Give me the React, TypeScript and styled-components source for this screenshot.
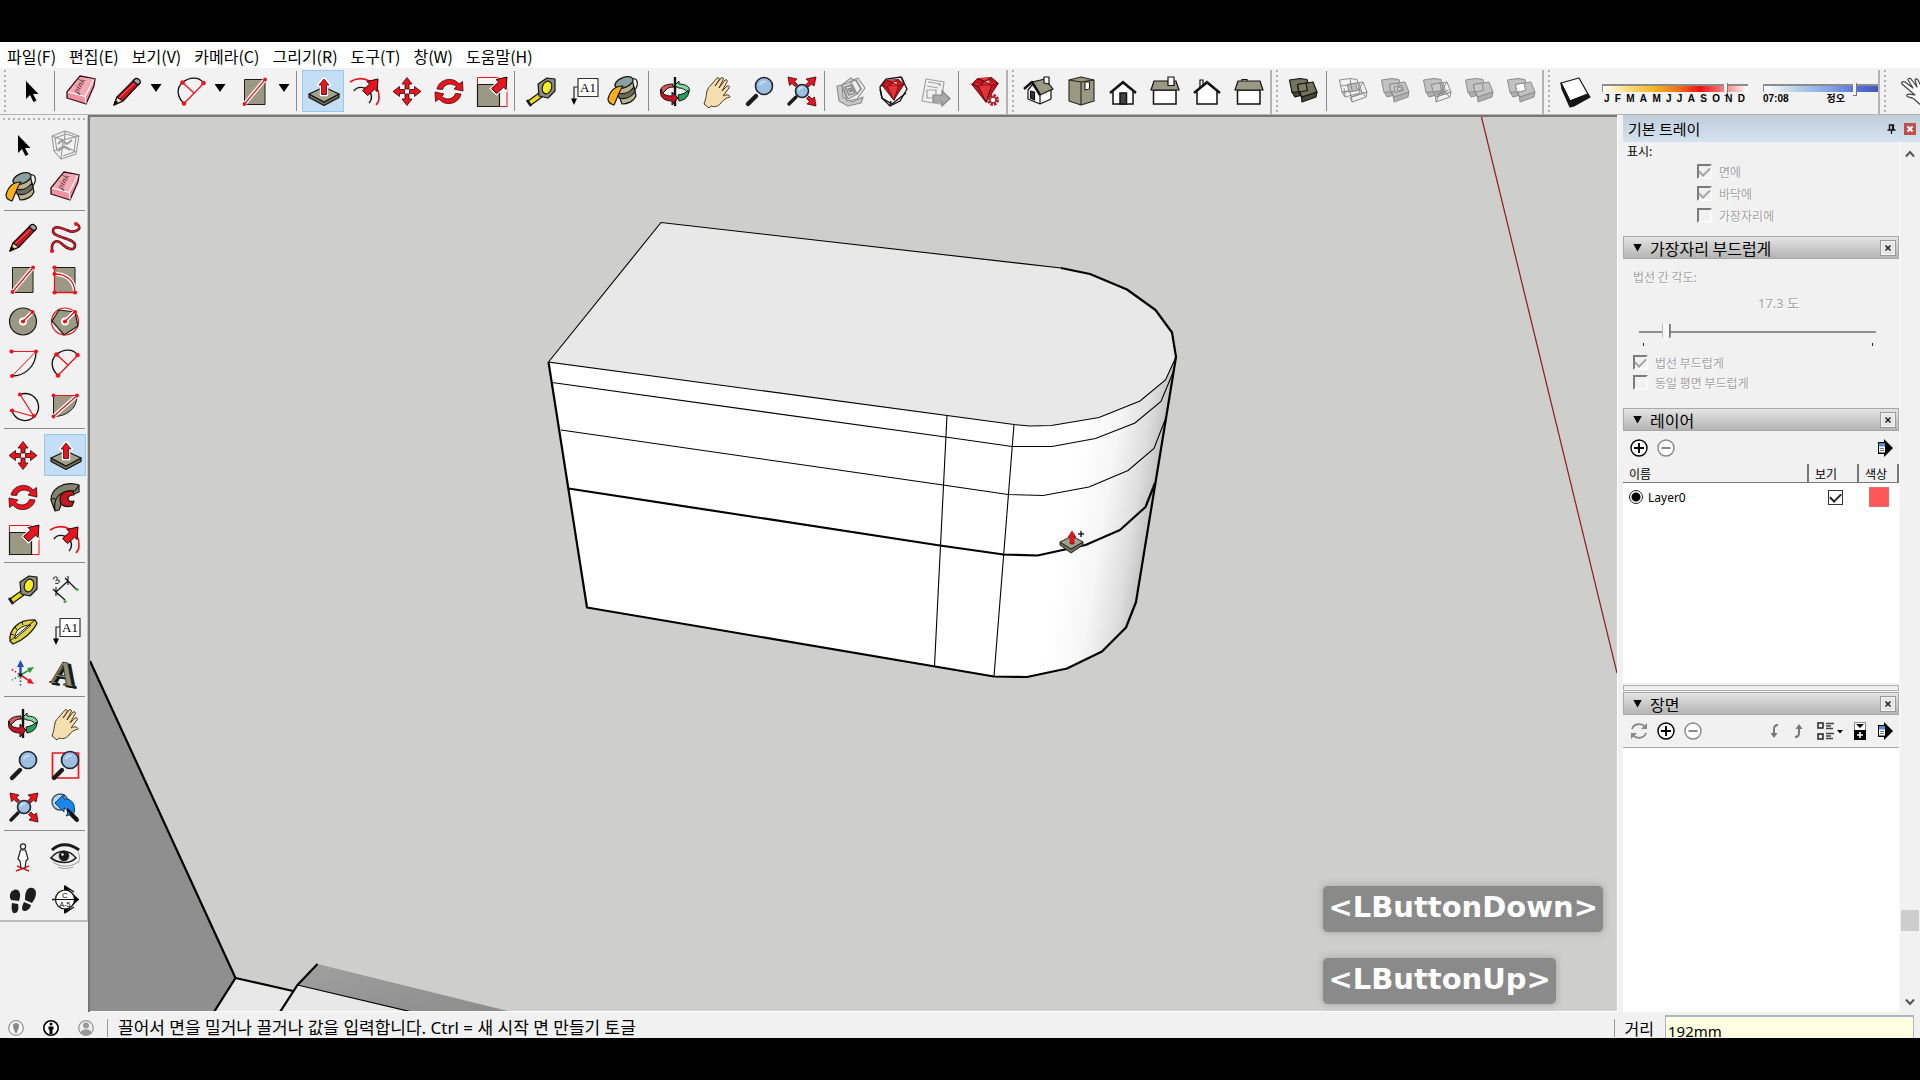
import React from "react";
import styled, { createGlobalStyle, css } from "styled-components";

const KR = `"Noto Sans CJK KR", "Noto Sans", sans-serif`;

const Global = createGlobalStyle`
  * { box-sizing: border-box; }
  body { margin: 0; background: #000; font-family: ${KR}; color: #000; }
  button { font: inherit; color: inherit; border: 0; padding: 0; background: none; }
`;

/* ---------- icons, each drawn on a 42 x 42 grid ---------- */

const TAN = "#9b9983";
const RED = "#e8141e";

const Dot = ({ x, y, r = 2.1 }: { x: number; y: number; r?: number }) => <circle cx={x} cy={y} r={r} fill={RED} />;
const Halo = ({ d }: { d: string }) => (
  <>
    <path d={d} fill="none" stroke="#fff" strokeWidth="4" />
    <path d={d} fill="none" stroke={RED} strokeWidth="1.3" />
  </>
);
const Lens = ({ x, y, r }: { x: number; y: number; r: number }) => (
  <>
    <circle cx={x} cy={y} r={r} fill="#9dbfe0" stroke="#1d2630" strokeWidth="1.6" />
    <path d={`M${x - r * 0.5} ${y - r * 0.1}A${r * 0.6} ${r * 0.6} 0 0 1 ${x + r * 0.2} ${y - r * 0.5}`} stroke="#cfe2f5" strokeWidth="1.6" fill="none" />
  </>
);
const Handle = ({ d, w = 4.4 }: { d: string; w?: number }) => <path d={d} stroke="#1b1b1b" strokeWidth={w} strokeLinecap="round" />;
const DiagArrow = ({ x = 0, y = 0 }: { x?: number; y?: number }) => (
  <path d={`M${x + 36} ${y + 7}l-11 2.5 2.6 2.6-7 6.5 5 5 7-6.5 2.4 2.4z`} fill={RED} stroke="#2a0003" strokeWidth="1" />
);
const Solids = ({ mode }: { mode: number }) => {
  const dark = mode === 0;
  const face = dark ? "#73745f" : "#c1c1c1";
  const side = dark ? "#474838" : "#b0b0b0";
  const hollowA = mode === 1;
  const hollowB = mode === 1 || mode === 3;
  return (
    <g stroke={dark ? "#14150f" : "#8c8c8c"} strokeWidth={dark ? 1.2 : 1} strokeLinejoin="round">
      <path d="M10 22l17-3 1 4-15 4z" fill={hollowA ? "none" : side} />
      <path d="M7.500 10L18 8.500l7 1 2.500 10.500L10 22.500z" fill={hollowA ? "none" : face} />
      <path d="M19.500 27L35 22l-1 5-14 5z" fill={hollowB ? "none" : side} />
      <path d="M15.500 14.500L31 12l4 10-15.500 5z" fill={hollowB ? "none" : face} />
      {!hollowB && <path d="M15.500 14.500l1.500 8 2.500 4.500" fill="none" />}
      <path d="M15.500 14.500L24 13l1.500 7.500-8.500 1.500z" fill={mode === 5 ? "#fff" : mode === 1 ? "#bcbcbc" : dark ? "#7d7e69" : "#c8c8c8"} />
      {mode === 1 && <path d="M8.500 16l8-1M18 8.500l2 12M13 26l-1-8M27 13l3 10M20 32l-2-5M31 12l-4 7 7 8" fill="none" />}
      {mode === 2 && <path d="M20 17l8-1.500 1.500 5-8 2zM23 18l4-1 1 3-4 1z" fill="#d2d2d2" />}
      {mode === 3 && <path d="M27 13l3 10M20 32l5-11M31 12l-5 8 8 7M21 24l12-4" fill="none" />}
    </g>
  );
};
const Sheets = () => (
  <g fill="#eee" stroke="#8f8f8f" strokeWidth="1.200" strokeLinejoin="round">
    <path d="M7 16l5-1 1 12 9 5 11-5-2 6-13 3-9-5z" fill="#c9c9c9" />
    <path d="M12 15l9-7 2 2 5-2 7 10-8 11-10 2z" />
    <path d="M12 15l9-3 6 12-9 5z" fill="#ddd" />
    <path d="M15 17l6-2 4 8-6 2zM19 12l7-2 5 9-4 5" fill="none" strokeWidth="1.700" />
    <path d="M18 19l3-1 2 3-3 1z" fill="#999" />
  </g>
);
const Gem = ({ y = 0, s = 1 }: { y?: number; s?: number }) => (
  <g transform={`translate(${21 - 21 * s} ${y}) scale(${s})`} stroke="#4a0006" strokeWidth=".9" strokeLinejoin="round">
    <path d="M7 15l6-6 15-1 7 6-13 20z" fill="#c31720" />
    <path d="M7 15l7 2 7-5 7 4 7-2M14 17l8 17 6-18M13 9l8 3 7-4" fill="#e3343c" />
    <path d="M21 12l4-1 1 3z" fill="#ffd0d0" stroke="none" />
  </g>
);

const art: Record<string, React.ReactNode> = {
  select: <path d="M16 11v18l4-4 3.500 7 3-1.500-3.500-6.500h5.500z" />,
  eraser: (
    <g strokeLinejoin="round">
      <path d="M20 6l15 3-1 7-8 18-19-6V22z" fill="#f48fa0" stroke="#2b1216" strokeWidth="1.300" />
      <path d="M20 7l14 2-9 17-17-4z" fill="#f7a9b6" />
      <path d="M8 22l17 4.500 9-17M25 26.500l1 7" fill="none" stroke="#fff" strokeWidth="1.200" />
      <text x="18" y="24" fontSize="9" fontFamily="Liberation Serif, serif" fontStyle="italic" fill="#3a1a20" transform="rotate(-62 18 24)">pink</text>
    </g>
  ),
  pencil: (
    <g strokeLinejoin="round" stroke="#160405" strokeWidth="1.100">
      <path d="M8 35l3-8L29 9l5 4-17 18z" fill="#c11720" />
      <path d="M13 28L31 11" stroke="#ff6a6a" strokeWidth="1" />
      <path d="M8 35l3-8 6 4z" fill="#ead9a5" />
      <path d="M8 35l1.500-4 2 1.500z" fill="#000" />
      <path d="M29 9c2-2 7 2 5 4l-2 2-5-4z" fill="#9aa3a8" />
    </g>
  ),
  freehand: (
    <g>
      <path d="M8 35C7 25 13 23 18 28S31 36 31 29 9 22 9 15 20 13 25 15 40 13 33 8" fill="none" stroke="#4d0a0f" strokeWidth="2.600" />
      <path d="M8 35C7 25 13 23 18 28S31 36 31 29 9 22 9 15 20 13 25 15 40 13 33 8" fill="none" stroke="#d0202a" strokeWidth="1.300" />
      <Dot x={8} y={35} /><Dot x={32} y={8} />
    </g>
  ),
  rect: (
    <g>
      <path d="M10.500 9.500h20.500v25H10.500z" fill={TAN} stroke="#1c1c18" />
      <Halo d="M10.500 34L31 9.500" /><Dot x={10.500} y={34} r={1.900} /><Dot x={31} y={9.500} r={1.900} />
    </g>
  ),
  rrect: (
    <g>
      <path d="M10.500 9.500h20.500v25H10.500z" fill={TAN} stroke="#1c1c18" />
      <Halo d="M10.500 16c11 0 20 6 20.500 18.500" />
      <path d="M10.500 9.500v25H31" fill="none" stroke={RED} strokeWidth="1.300" />
      <Dot x={10.500} y={9.500} /><Dot x={10.500} y={16} /><Dot x={10.500} y={34.500} /><Dot x={31} y={34.500} />
    </g>
  ),
  circle: (
    <g>
      <circle cx="21" cy="21.500" r="13.500" fill={TAN} stroke="#1c1c18" strokeWidth="1.200" />
      <circle cx="21" cy="21.500" r="4" fill="#fff" /><Halo d="M21 21.500L30.500 12" /><Dot x={21} y={21.500} /><Dot x={30.500} y={12} />
    </g>
  ),
  polygon: (
    <g>
      <circle cx="21" cy="21.500" r="13.500" fill="none" stroke={RED} strokeWidth="1.200" />
      <path d="M15 10l16 2 3 14-14 9-12-14z" fill={TAN} stroke="#1c1c18" strokeWidth="1.200" />
      <circle cx="21" cy="21.500" r="4" fill="#fff" /><Halo d="M21 21.500L30.500 12" /><Dot x={21} y={21.500} /><Dot x={31} y={12} />
    </g>
  ),
  arc: (
    <g fill="none">
      <path d="M10 34c12 0 24-9 24-24" stroke="#111" strokeWidth="1.300" />
      <path d="M9.500 9.500H34L10 34" stroke={RED} /><Dot x={9.500} y={9.500} /><Dot x={34} y={9.500} /><Dot x={10} y={34} />
    </g>
  ),
  arc2: (
    <g fill="none">
      <path d="M14 33.500C7 27 6 18 12.500 12.500S29 6 33.500 13" stroke="#111" strokeWidth="1.300" />
      <path d="M14 33.500l19.500-20M12.500 12.500l11.500 10.500" stroke={RED} strokeWidth="1.300" />
      <Dot x={12.500} y={12.500} r={2.300} /><Dot x={33.500} y={13} r={2.300} /><Dot x={14} y={33.500} r={2.300} />
    </g>
  ),
  arc3: (
    <g fill="none">
      <path d="M18 10.500a13.500 13.500 0 1 1-8 16" stroke="#111" strokeWidth="1.300" />
      <path d="M18 10.500l14 22-22-6" stroke={RED} strokeWidth="1.200" /><Dot x={18} y={10.500} /><Dot x={32} y={32} /><Dot x={10} y={26.500} />
    </g>
  ),
  pie: (
    <g>
      <path d="M9.500 11.500H33c0 14-11 21-23.500 21z" fill={TAN} stroke="#1c1c18" />
      <Halo d="M9.500 32.500L33 11.500" /><path d="M9.500 11.500H33" stroke={RED} />
      <Dot x={9.500} y={11.500} r={1.900} /><Dot x={33} y={11.500} r={1.900} /><Dot x={9.500} y={32.500} r={1.900} />
    </g>
  ),
  move: (
    <g fill={RED} stroke="#33070a" strokeWidth=".8">
      {[0, 90, 180, 270].map((a) => (
        <path key={a} transform={`rotate(${a} 21 21.500)`} d="M21 7.500l5 6.500h-3v5h-4v-5h-3z" />
      ))}
    </g>
  ),
  pushpull: (
    <g strokeLinejoin="round" stroke="#15150f" strokeWidth="1.200">
      <path d="M7 24l15 8 15-8v3.500l-15 8-15-8z" fill="#6f6e5b" />
      <path d="M7 24l15-7 15 7-15 8z" fill="#a3a18c" />
      <path d="M22 8l6 7h-3v10h-6V15h-3z" fill={RED} stroke="#fff" strokeWidth="2.400" />
      <path d="M22 9l5 6h-2.500v9.500h-5V15H17z" fill={RED} stroke="#4b0508" strokeWidth=".8" />
    </g>
  ),
  rotate: (
    <g fill={RED} stroke="#33070a" strokeWidth=".8">
      <path d="M9 19c2-10 16-13 22-5l3.500-2.500L35 21l-9-2 2.500-2.500c-5-4-12-3-14 3z" />
      <path d="M33 24c-2 10-16 13-22 5l-3.500 2.500L7 22l9 2-2.500 2.500c5 4 12 3 14-3z" />
    </g>
  ),
  follow: (
    <g strokeLinejoin="round" stroke="#15150f" strokeWidth="1.200">
      <path d="M7 24C7 12 20 6 31 8l4 1v7l-5 2c-9-3-15 1-13 11l-2 5-4 1z" fill="#84836e" />
      <path d="M11 34c-2-12 5-20 20-19l4-6M7 24c1-2 4-2 5 0" fill="none" />
      <path d="M16 24c0-7 5-10 13-9l1 4c-4 0-6 2-6 4s3 3 6 2l-2 5c-7 2-12-1-12-6z" fill="#c5161f" />
    </g>
  ),
  scale: (
    <g>
      <path d="M7.500 7.500h29.500v29H7.500z" fill="#f6f3f3" stroke={RED} />
      <path d="M7.500 14.500h22v22h-22z" fill={TAN} stroke="#1c1c18" strokeWidth="1.200" />
      <path d="M37 7l-11 2.500 2.600 2.600-7 6.500 5 5 7-6.500 2.400 2.400z" fill="none" stroke="#fff" strokeWidth="3" /><DiagArrow x={1} />
    </g>
  ),
  offset: (
    <g fill="none">
      <path d="M6 12C18 4 36 12 35 28c0 3-1 5-3 7" stroke={RED} strokeWidth="1.600" />
      <path d="M10 21c4-6 14-4 17 3 1 4 0 7-2 9" stroke="#111" strokeWidth="1.400" /><DiagArrow x={-2} y={2} />
    </g>
  ),
  tape: (
    <g strokeLinejoin="round" stroke="#14140c" strokeWidth="1.200">
      <path d="M8 31l11-8 3 4-11 8z" fill="#e9dc21" /><path d="M7 30l4 6" strokeWidth="2.500" />
      <path d="M18 14l9-6 8 1v12l-7 7-9-2z" fill="#8c8b80" /><ellipse cx="27" cy="17.500" rx="4.600" ry="6.500" fill="#f6ee25" transform="rotate(18 27 17.500)" />
    </g>
  ),
  dims: (
    <g stroke="#111" strokeWidth="1.100" fill="none">
      <path d="M12 24L24 13M12 24l9 8M24 13l8 8M9 21l6 6M12 19v9M21 10l6 6M24 8v9" />
      <circle cx="21" cy="33.500" r="1.600" fill="#35b041" stroke="none" /><circle cx="33" cy="21.500" r="1.600" fill="#35b041" stroke="none" />
      <text x="9" y="16" fontSize="11" fontFamily="Liberation Sans, sans-serif" fill="#111" stroke="none" transform="rotate(-30 12 12)">3</text>
    </g>
  ),
  protractor: (
    <g strokeLinejoin="round">
      <path d="M8 31C7 20 16 9 33 10l2 3C31 22 20 31 11 34z" fill="#dfd24a" stroke="#1b190a" strokeWidth="1.300" />
      <path d="M13 29C12 21 19 15 29 15z" fill="#f3f3f3" stroke="#1b190a" /><path d="M8 31l25-21M9 24l3 1M13 17l2 3M20 12l1 3" fill="none" stroke="#1b190a" />
    </g>
  ),
  text: (
    <g>
      <path d="M16 17h-4v13" fill="none" stroke="#222" strokeWidth="1.200" /><path d="M12 35l-3-6.500h6z" />
      <path d="M16 8.500h20v18H16z" fill="#fff" stroke="#333" strokeWidth="1.200" />
      <text x="26" y="22" textAnchor="middle" fontSize="13" fontFamily="Liberation Serif, serif">A1</text>
    </g>
  ),
  paint: (
    <g strokeLinejoin="round" stroke="#17170f" strokeWidth="1.200">
      <path d="M27 9c7-2 8 5 4 11" fill="none" />
      <path d="M11 15l17-6 4 17c-2 5-8 8-14 8z" fill="#b9b594" /><path d="M14 23c6 2 12-1 16-6l1 5c-4 5-10 8-16 6z" fill="#6c6a5c" />
      <ellipse cx="20" cy="12.500" rx="9.500" ry="5" transform="rotate(-22 20 12.500)" fill="#8ba0a0" />
      <path d="M4 29c2-8 7-13 15-13-4 5-6 13-9 19-4-1-6-3-6-6z" fill="#f7b01c" />
    </g>
  ),
  axes: (
    <g fill="none" strokeWidth="1.600">
      <path d="M18.500 23V12" stroke="#2050b8" strokeWidth="2.400" /><path d="M18.500 8l-3.500 7h7z" fill="#2050b8" />
      <path d="M18.500 23l9-5" stroke="#2c9a3a" /><path d="M32 15l-7 1 3 5z" fill="#2c9a3a" />
      <path d="M18.500 23l9 6" stroke={RED} /><path d="M32 32l-7-1 3-5z" fill={RED} />
      <path d="M18.500 25v10" stroke="#2050b8" strokeDasharray="1.500 2" /><path d="M17 24l-7 4" stroke="#2c9a3a" strokeDasharray="1.500 2" /><path d="M17 22l-8-5" stroke={RED} strokeDasharray="1.500 2" />
      <circle cx="18.500" cy="23" r="1.800" fill="#111" />
    </g>
  ),
  text3d: (
    <g fontFamily="Liberation Serif, serif" fontWeight="700" fontSize="34" transform="rotate(10 21 21)">
      <text x="10" y="34" fill="#1d1d18" stroke="#14140f" strokeWidth="1.200">A</text>
      <text x="7" y="33" fill="#8f8e7a" stroke="#14140f" strokeWidth=".7">A</text>
    </g>
  ),
  orbit: (
    <g strokeLinejoin="round" stroke="#12120e" strokeWidth="1">
      <path d="M19 14C8 14 4 20 8 24l4-4c1-2 4-3 7-3z" fill="#d5565b" />
      <path d="M23 17l-4 0 6-6v3c8 0 13 4 9 10-1-3-4-6-9-6z" fill="#7ed6a0" />
      <path d="M34 20c2 6-3 10-9 11l-1-6c5-1 8-2 10-5z" fill="#23a05a" />
      <path d="M21 7v29" strokeWidth="2.400" />
      <path d="M7 19c1 6 6 7 11 7v-4l6 6-6 7v-4C9 31 5 26 7 19z" fill="#c5122a" />
    </g>
  ),
  pan: (
    <path d="M8 34c2-5 2-8 3-13 1-3 2-4 4-6l6-7c1-1 3 0 2 2l-4 6 6-8c2-1 3 0 2 2l-4 8 6-8c2-1 3 1 2 2l-5 9 5-5c2-1 3 1 2 2l-6 8c4-2 7-1 7 1-4 1-7 3-9 6-3 4-7 4-10 3l-2 2z" fill="#f5deb0" stroke="#4b3a22" strokeWidth="1" strokeLinejoin="round" />
  ),
  zoom: <g><Handle d="M10 34l8-8" /><Lens x={26} y={16} r={8.500} /></g>,
  zoomwin: <g><path d="M8.500 9h26v25h-26z" fill="none" stroke={RED} strokeWidth="1.700" /><Handle d="M10 34l8-8" /><Lens x={26} y={16} r={8.500} /></g>,
  extents: (
    <g>
      <Handle d="M9 34l7-7" w={3.400} /><Lens x={22} y={21} r={6.500} />
      <g fill={RED} stroke="#33070a" strokeWidth=".8">
        <path d="M8 7l9 2-2.500 2.500 3 3-2.500 2-3-3-2.500 2z" /><path d="M36 7l-2 9-2.500-2-3 3-2.500-2.500 3-3L26 9z" /><path d="M36 36l-9-2 2.500-2.500-3-3 2.500-2.500 3 3 2.500-2z" />
      </g>
    </g>
  ),
  previous: (
    <g strokeLinejoin="round">
      <circle cx="16" cy="16" r="8" fill="#b9d3ea" stroke="#456" strokeWidth="1.400" />
      <Handle d="M25 26l8 8" w={4} />
      <path d="M11 17l9-9v5c8-1 12 6 10 14l-8 3c3-3 2-8-2-8v4z" fill="#1c86e8" stroke="#0c3c70" strokeWidth="1" />
      <path d="M23 23l10 10" stroke="#111" strokeWidth="2.500" />
    </g>
  ),
  person: (
    <g>
      <path d="M14 35l13-5M15 30l12 5" stroke={RED} strokeWidth="1.400" />
      <path d="M18.500 14l-2.500 9 2 2 1 7h4l1-7 2-2-2.500-9z" fill="#fff" stroke="#222" strokeWidth="1.200" strokeLinejoin="round" />
      <circle cx="21" cy="10.500" r="2.600" fill="#fff" stroke="#222" strokeWidth="1.200" />
    </g>
  ),
  eye: (
    <g fill="none" stroke="#1a1a1a">
      <path d="M8 14C15 7 26 7 35 14" strokeWidth="3" /><path d="M7 22c7-9 18-9 25 0-6 6-17 6-25 0z" fill="#e8e8e8" strokeWidth="1.600" />
      <circle cx="20" cy="20" r="4.800" fill="#1a1a1a" /><circle cx="18.500" cy="18.500" r="1.300" fill="#fff" stroke="none" />
      <path d="M9 26c6 5 17 6 25 0M14 31c5 2 10 2 15 0M34 16c2 4 2 8 0 11" stroke="#999" />
    </g>
  ),
  feet: (
    <g fill="#1d1d1d">
      <path d="M10 13c5-4 9 0 8 6l-1 4-8-1c-2-4-1-7 1-9zM10 25l6 1c1 4 0 9-3 9-3 1-4-4-3-10z" />
      <path d="M25 12c3-4 9-2 9 3 0 4-2 7-4 10l-7-3c0-4 0-7 2-10zM22 24l7 3c-1 4-4 6-7 6-3-1-2-5 0-9z" />
    </g>
  ),
  section: (
    <g>
      <path d="M8 21.500h27M21 8l9 6M21 35l9-6M21 8l5 4M21 35l5-4" stroke="#111" strokeWidth="1.400" />
      <path d="M20 7l15 14.500L20 36z" /><circle cx="21" cy="21.500" r="9.500" fill="#fff" stroke="#111" strokeWidth="1.200" /><path d="M12 21.500h18" stroke="#111" />
      <g fontFamily="Liberation Sans, sans-serif" fontSize="8" textAnchor="middle"><text x="21" y="20">C</text><text x="21" y="29" fontSize="7">A-5</text></g>
    </g>
  ),
  component: (
    <g fill="none" stroke="#9a9a9a" strokeWidth="1.100" strokeLinejoin="round">
      <path d="M8 12l13-5 14 5-3 18-15 5-7-8zM8 12l11 4 16-4M19 16l-2 19M11 14l11-4 10 3-2 15-11 4M11 14l2 13M10 27l10-5 12 6M21 7l-1 15" />
      <path d="M14 20l4-4 5 4 5-4M14 27l6-4 6 3" strokeWidth="1.800" />
    </g>
  ),
  sheets: <Sheets />,
  rubySheets: (
    <g>
      <path d="M8 17l6-8 15-2 6 12-7 12-10 5-8-8z" fill="#f6f6f6" stroke="#111" strokeWidth="1.300" /><path d="M8 19l2 9 10 6 14-11M19 31l-1 5M29 7l3 5" fill="none" stroke="#111" strokeWidth="1.400" /><Gem y={3} s={0.800} />
    </g>
  ),
  export: (
    <g fill="#f2f2f2" stroke="#a2a2a2" strokeWidth="1.200">
      <path d="M12 9l18 3-3 22-19-3z" /><path d="M14 12l13 2M13 16l11 2M13 20h9v8h-9zM24 14l3 2" fill="none" />
      <path d="M19 25h9v-4l8 7.500-8 7.500v-4h-9z" fill="#a9a9a9" stroke="#878787" />
    </g>
  ),
  gem: (
    <g><Gem s={0.950} /><circle cx="29" cy="30" r="4.500" fill="none" stroke="#b3222a" strokeWidth="3" strokeDasharray="2.400 1.100" /><circle cx="29" cy="30" r="3" fill="#fff" stroke="#b3222a" strokeWidth="1.500" /></g>
  ),
  houseIso: (
    <g stroke="#111" strokeWidth="1.200" strokeLinejoin="round">
      <path d="M10 20l5-6 7 9v11l-12-5zM22 23l11-4v10l-11 5z" fill="#fff" /><path d="M14 12l13-3 8 10-13 6z" fill={TAN} /><path d="M6 19l8-7 8 13" fill="none" strokeWidth="2.400" /><path d="M26 7h5v7l-5-1z" fill="#fff" />
      <path d="M12.500 21l4 1v8l-4-2z" fill="#333" />
    </g>
  ),
  houseTop: (
    <g stroke="#25251d" strokeWidth="1.100" strokeLinejoin="round"><path d="M9 10l12-3 13 3v21l-13 4-12-4z" fill={TAN} /><path d="M9 10l12 2 13-2M21 12v23" fill="none" /><path d="M25 12h4.500v7l-4.500 1z" fill="#fff" /></g>
  ),
  houseFront: (
    <g stroke="#111" strokeWidth="1.500"><path d="M11 21l10-8 10 8v13H11z" fill="#fff" /><path d="M8 23l13-11 13 11" fill="none" strokeWidth="2.400" /><path d="M18 23h6.500v11H18z" fill="#444" /></g>
  ),
  houseRight: (
    <g stroke="#111" strokeWidth="1.200"><path d="M9.500 20h22.500v14H9.500z" fill="#fff" strokeWidth="1.500" /><path d="M10 11h22l3 9H7z" fill={TAN} /><path d="M24 7h6v8.500h-6z" fill="#fff" /></g>
  ),
  houseBack: (
    <g stroke="#111" strokeWidth="1.500"><path d="M14 18v-8h3v6" fill="#fff" strokeWidth="1.200" /><path d="M11 21l10-8 10 8v13H11z" fill="#fff" /><path d="M8 23l13-11 13 11" fill="none" strokeWidth="2.400" /></g>
  ),
  houseLeft: (
    <g stroke="#111" strokeWidth="1.200"><path d="M9.500 20h22.500v14H9.500z" fill="#fff" strokeWidth="1.500" /><path d="M14 11V9.500h5V11" fill="#fff" /><path d="M10 11h22l3 9H7z" fill={TAN} /></g>
  ),
  shadow: (
    <g stroke="#151515" strokeWidth="1.200" strokeLinejoin="round"><path d="M7 13l18-5 9 16-18 7z" fill="#fff" /><path d="M7 13l9 18v6L8 19zM16 31l18-7 2 3-16 9-4 1z" fill="#151515" /></g>
  ),
  touch: (
    <path d="M34 36c-5-1-7-5-10-7-4-2-8-2-7-4s6 0 8 0L12 14c-1-2 1-3 3-2l8 6-5-8c0-2 2-2 3-1l6 8-2-7c1-2 2-1 3 0l5 10" fill="#fff" stroke="#444" strokeWidth="1.200" strokeLinejoin="round" />
  ),
  solid0: <Solids mode={0} />, solid1: <Solids mode={1} />, solid2: <Solids mode={2} />,
  solid3: <Solids mode={3} />, solid4: <Solids mode={4} />, solid5: <Solids mode={5} />,
};

/* ---------- frame ---------- */

const Screen = styled.div`
  height: 100vh;
  padding: 42px 0;
  background: #000;
  display: flex;
  flex-direction: column;
  overflow: hidden;
`;
const MenuBar = styled.nav`
  flex: none;
  height: 26px;
  padding: 2px 7px 0;
  background: #fff;
  display: flex;
  align-items: center;
  gap: 13px;
`;
const MenuItem = styled.button`
  font-size: 16px;
  line-height: 24px;
  white-space: nowrap;
`;
const TopBar = styled.div`
  flex: none;
  height: 47px;
  padding-top: 2px;
  background: #f2f2f2;
  border-bottom: 1px solid #b4b4b4;
  display: flex;
  overflow: hidden;
`;
const Group = styled.div`
  flex: none;
  display: flex;
  align-items: flex-start;
  border-right: 2px solid #b4b4b4;
`;
const dots = "radial-gradient(circle at 1px 1px, #b0b0b0 1px, transparent 1.500px)";
const Grip = styled.span`
  width: 3px;
  height: 42px;
  margin: 0 3px 0 4px;
  background: ${dots} 0 0 / 3px 5px;
`;
const Tool = styled.button<{ $on?: boolean }>`
  flex: none;
  width: 42px;
  height: 42px;
  svg { display: block; width: 100%; height: 100%; }
  ${(p) => p.$on && css`background: #c4dff5; box-shadow: inset 0 0 0 1px #98c8ee;`}
`;
const Split = styled.div`
  display: flex;
  margin: 0 2px 0 4px;
`;
const Caret = styled.button`
  width: 16px;
  height: 42px;
  display: grid;
  place-items: center;
  padding-bottom: 6px;
`;
const Triangle = styled.span<{ $w?: number }>`
  display: block;
  width: ${(p) => p.$w ?? 12}px;
  height: 8px;
  background: #000;
  clip-path: polygon(0 0, 100% 0, 50% 100%);
`;
const VLine = styled.span`
  width: 1px;
  height: 40px;
  margin: 1px 5px 0 2px;
  background: #8a8a8a;
`;

const Icon = ({ n }: { n: string }) => <svg viewBox="0 0 42 42" aria-hidden="true">{art[n]}</svg>;
const T = ({ n, on }: { n: string; on?: boolean }) => <Tool type="button" aria-label={n} $on={on}><Icon n={n} /></Tool>;
const S = ({ n }: { n: string }) => (
  <Split><T n={n} /><Caret type="button" aria-label={`${n} menu`}><Triangle $w={11} /></Caret></Split>
);

const SunBox = styled.div`
  display: flex;
  gap: 15px;
  padding: 13px 0 0 6px;
`;
const SunField = styled.div<{ $w: number }>`
  width: ${(p) => p.$w}px;
  overflow: hidden;
`;
const SunRange = styled.input<{ $fill: string }>`
  appearance: none;
  display: block;
  width: 100%;
  height: 10px;
  margin: 0;
  background: transparent;
  &::-webkit-slider-runnable-track {
    height: 8px;
    border-top: 2px solid #8c8c8c;
    border-left: 1px solid #8c8c8c;
    background: ${(p) => p.$fill};
  }
  &::-webkit-slider-thumb {
    appearance: none;
    width: 4px;
    height: 14px;
    margin-top: -4px;
    background: #f4f4f4;
    border-right: 1px solid #777;
    border-bottom: 1px solid #777;
  }
`;
const Scale = styled.div`
  display: flex;
  justify-content: space-between;
  padding: 0 3px 0 2px;
  font: 700 10px/12px "Liberation Sans", ${KR};
`;
const TimeScale = styled(Scale)`
  padding: 0 33px 0 0;
`;

/* ---------- middle ---------- */

const Middle = styled.div`
  flex: 1;
  min-height: 0;
  display: grid;
  grid-template-columns: 90px minmax(0, 1fr) 303px;
  background: #f1f1f1;
`;
const SideBar = styled.aside`
  padding-top: 1px;
  border-right: 2px solid #777;
`;
const SideInner = styled.div`
  width: 88px;
  padding: 2px 0 0 2px;
  border-right: 1px solid #c4c4c4;
  border-bottom: 2px solid #bcbcbc;
`;
const SideGrip = styled.div`
  height: 6px;
  margin: 0 2px 0 1px;
  background: ${dots} 0 0 / 5px 3px repeat-x;
`;
const ToolGrid = styled.div`
  display: grid;
  grid-template-columns: 42px 42px;
`;
const HLine = styled.hr`
  height: 1px;
  margin: 2px 2px 5px;
  border: 0;
  background: #8a8a8a;
`;
const Canvas = styled.main`
  position: relative;
  background: #cececd;
  overflow: hidden;
  border-top: 2px solid #777;
  border-bottom: 1px solid #fff;
  > svg { display: block; width: 100%; height: 100%; }
`;
const KeyStack = styled.div`
  position: absolute;
  right: 14px;
  bottom: 7px;
  display: flex;
  flex-direction: column;
  align-items: flex-start;
  gap: 26px;
`;
const Key = styled.div`
  height: 46px;
  padding: 0 5px;
  border-radius: 5px;
  background: #8a8a8a;
  box-shadow: 0 0 5px 2px rgba(130, 130, 130, 0.35);
  color: #fff;
  font: 700 29px/42px "DejaVu Sans", sans-serif;
`;

/* ---------- tray ---------- */

const Tray = styled.aside`
  min-height: 0;
  padding-left: 6px;
  border-left: 1px solid #fff;
  display: flex;
  flex-direction: column;
`;
const TrayTitle = styled.header`
  flex: none;
  height: 27px;
  margin-left: -1px;
  padding: 0 4px 0 5px;
  display: flex;
  align-items: center;
  gap: 8px;
  background: linear-gradient(#c0cedb, #d5e2f0);
  font-size: 15px;
  line-height: 24px;
  h1 { flex: 1; margin: 0; font: inherit; }
  svg { display: block; }
`;
const RedClose = styled.button`
  width: 12px;
  height: 12px;
  background: #c0504d;
  color: #fff;
  display: grid;
  place-items: center;
`;
const TrayRow = styled.div`
  flex: 1;
  min-height: 0;
  display: flex;
  margin-left: -1px;
`;
const TrayBody = styled.div`
  flex: 1;
  min-width: 0;
  display: flex;
  flex-direction: column;
  border-right: 1px solid #fafafa;
`;
const ScrollBar = styled.div`
  width: 20px;
  display: flex;
  flex-direction: column;
  align-items: center;
`;
const ScrollButton = styled.button<{ $h: number }>`
  width: 20px;
  height: ${(p) => p.$h}px;
  display: grid;
  place-items: center;
`;
const Gap = styled.span<{ $n: number }>`
  flex: ${(p) => p.$n};
`;
const Thumb = styled.span`
  width: 18px;
  height: 21px;
  background: #cdcdcd;
`;
const SectionHead = styled.div`
  flex: none;
  height: 23px;
  padding: 0 2px 0 9px;
  border: 1px solid #a8a8a8;
  background: linear-gradient(#e4e4e4, #b4b4b4);
  display: flex;
  align-items: center;
  gap: 8px;
  h2 { flex: 1; margin: 0; font: 400 16px/20px ${KR}; }
`;
const CloseButton = styled.button`
  width: 16px;
  height: 16px;
  border: 1px solid #999;
  background: #e6e6e6;
  box-shadow: inset 0 0 0 1px #f6f6f6;
  display: grid;
  place-items: center;
`;
const DisplayBox = styled.div`
  height: 94px;
  padding: 0 4px;
  font-size: 12px;
  line-height: 18px;
`;
const Options = styled.div<{ $indent?: number; $top?: number; $gap: number }>`
  display: flex;
  flex-direction: column;
  gap: ${(p) => p.$gap}px;
  padding: ${(p) => p.$top ?? 0}px 0 0 ${(p) => p.$indent ?? 0}px;
`;
const Option = styled.label`
  display: flex;
  align-items: center;
  gap: 7px;
  height: 15px;
  font-size: 12px;
  line-height: 15px;
  color: #a3a3a3;
  text-shadow: 1px 1px #fff;
`;
const Check = styled.input<{ $live?: boolean }>`
  appearance: none;
  width: 15px;
  height: 15px;
  margin: 0;
  display: grid;
  place-items: center;
  border: ${(p) => (p.$live ? "1px solid #333" : "2px solid #fafafa")};
  ${(p) => !p.$live && css`border-top-color: #7b7b7b; border-left-color: #7b7b7b;`}
  background: ${(p) => (p.$live ? "#fff" : "#f1f1f1")};
  &:checked::after {
    content: "";
    width: 9px;
    height: 5px;
    border-left: 2px solid ${(p) => (p.$live ? "#222" : "#a3a3a3")};
    border-bottom: 2px solid ${(p) => (p.$live ? "#222" : "#a3a3a3")};
    transform: translateY(-1px) rotate(-45deg);
  }
`;
const SoftBox = styled.div`
  height: 149px;
  padding: 9px 10px 0 10px;
  font-size: 12px;
  line-height: 18px;
  color: #a3a3a3;
  text-shadow: 1px 1px #fff;
`;
const Degrees = styled.output`
  display: block;
  margin: 8px 0 0 125px;
  font-family: "Noto Sans", ${KR};
  font-size: 13px;
`;
const SoftRange = styled.input`
  appearance: none;
  display: block;
  width: 237px;
  height: 17px;
  margin: 12px 0 0 6px;
  background: linear-gradient(#8f8f8f, #8f8f8f) 0 7px / 100% 2px no-repeat;
  &::-webkit-slider-thumb {
    appearance: none;
    width: 9px;
    height: 17px;
    clip-path: polygon(0 0, 100% 0, 100% 75%, 50% 100%, 0 75%);
    background: linear-gradient(90deg, #bbb 0 1px, #f8f8f8 1px 7px, #777 7px);
  }
`;
const Ticks = styled.div`
  display: flex;
  justify-content: space-between;
  width: 230px;
  margin: 2px 0 9px 10px;
  span { width: 1px; height: 3px; background: #222; }
`;
const IconRow = styled.div<{ $h: number }>`
  flex: none;
  height: ${(p) => p.$h}px;
  padding: 0 6px 0 7px;
  display: flex;
  align-items: center;
  gap: 9px;
  svg { display: block; }
`;
const IconSet = styled.div`
  display: flex;
  align-items: center;
  gap: 11px;
  margin-left: auto;
`;
const LayerList = styled.div`
  flex: none;
  height: 219px;
  background: #fff;
`;
const LayerTable = styled.table`
  width: 100%;
  border-collapse: separate;
  border-spacing: 0;
  table-layout: fixed;
  font-size: 12px;
  line-height: 17px;
  th {
    height: 19px;
    padding: 0 0 0 6px;
    text-align: left;
    font-weight: 400;
    background: #f1f1f1;
    border-right: 2px solid #777;
    border-bottom: 1px solid #777;
  }
  td { height: 28px; padding: 0; vertical-align: middle; }
`;
const LayerName = styled.label`
  display: flex;
  align-items: center;
  gap: 5px;
  padding-left: 6px;
  font-family: "Noto Sans", ${KR};
`;
const Radio = styled.input`
  appearance: none;
  width: 14px;
  height: 14px;
  margin: 0;
  border: 1px solid #222;
  border-radius: 50%;
  background: radial-gradient(circle, #000 0 4px, #fff 5px);
`;
const Swatch = styled.button`
  display: block;
  width: 20px;
  height: 20px;
  margin-left: 10px;
  background: #ff5757;
  border: 1px solid #e07070;
`;
const Center = styled.span`
  display: flex;
  padding-left: 19px;
`;
const Splitter = styled.div`
  flex: none;
  height: 6px;
  margin: 2px 0 1px;
  border: 1px solid #b0b0b0;
`;
const SceneList = styled.div`
  flex: 1;
  background: #fff;
  border-top: 1px solid #a8a8a8;
`;

/* ---------- status ---------- */

const Status = styled.footer`
  flex: none;
  height: 26px;
  padding: 6px 6px 0 8px;
  background: #f1f1f1;
  display: flex;
  align-items: center;
  gap: 19px;
  overflow: hidden;
  svg { display: block; flex: none; }
`;
const StatusText = styled.p`
  flex: 1;
  margin: 0 0 0 -6px;
  padding-left: 10px;
  border-left: 1px solid #999;
  font-family: "Noto Sans", ${KR};
  font-size: 17px;
  line-height: 18px;
  white-space: nowrap;
`;
const Measure = styled.label`
  display: flex;
  align-items: center;
  gap: 11px;
  font-size: 16px;
  line-height: 18px;
  span { padding-left: 10px; border-left: 1px solid #999; }
`;
const MeasureInput = styled.input`
  width: 249px;
  height: 30px;
  margin-top: 4px;
  padding: 0 2px;
  border: 1px solid #aab4c4;
  border-top-width: 2px;
  background: #ffffe1;
  font: 15px/22px "Noto Sans", ${KR};
  color: #000;
`;

/* ---------- small icons ---------- */

const Circled = ({ plus }: { plus?: boolean }) => {
  const c = plus ? "#000" : "#888";
  return (
    <svg width="18" height="18" viewBox="0 0 18 18">
      <circle cx="9" cy="9" r="8" fill="#fff" stroke={c} strokeWidth="1.400" />
      <path d={plus ? "M4 9h10M9 4v10" : "M4.500 9h9"} stroke={c} strokeWidth="2" />
    </svg>
  );
};
const Details = () => (
  <svg width="16" height="18" viewBox="0 0 16 18">
    <path d="M1 3h6V0l9 9-9 9v-3H1z" /><path d="M2 4.500h6v9H2z" fill="#fff" /><path d="M2 4.500h6v3H2z" fill="#4a90d9" /><path d="M3 9.500h4M3 11.500h4" stroke="#777" />
  </svg>
);
const Cross = ({ c = "#222", w = 1.500 }: { c?: string; w?: number }) => (
  <svg width="8" height="8" viewBox="0 0 8 8"><path d="M1.500 1.500l5 5M6.500 1.500l-5 5" stroke={c} strokeWidth={w} /></svg>
);
const Chevron = ({ up }: { up?: boolean }) => (
  <svg width="10" height="8" viewBox="0 0 10 8"><path d={up ? "M1 6.500l4-4.500 4 4.500" : "M1 1.500L5 6l4-4.500"} fill="none" stroke="#555" strokeWidth="2" /></svg>
);

const Head = ({ title }: { title: string }) => (
  <SectionHead>
    <Triangle $w={9} />
    <h2>{title}</h2>
    <CloseButton type="button" aria-label={`${title} close`}><Cross /></CloseButton>
  </SectionHead>
);

/* ---------- model ---------- */

const Model = () => (
  <svg viewBox="90 117 1527 894" preserveAspectRatio="xMinYMin slice" aria-hidden="true">
    <defs>
      <linearGradient id="round" gradientUnits="userSpaceOnUse" x1="1070" y1="487" x2="1153" y2="500">
        <stop offset="0" stopColor="#fff" /><stop offset=".45" stopColor="#f6f6f6" /><stop offset=".8" stopColor="#dedede" /><stop offset="1" stopColor="#c4c4c4" />
      </linearGradient>
      <linearGradient id="slab" x1="0" y1="0" x2="1" y2="1"><stop offset="0" stopColor="#a0a0a0" /><stop offset="1" stopColor="#8c8c8c" /></linearGradient>
    </defs>
    <path d="M90 661L235.500 978 214 1012H90z" fill="#8f8f8f" />
    <path d="M235.500 978L293 991 297.500 985 412 1012H214z" fill="#e8e8e8" />
    <path d="M317.500 964L512 1012H412L297.500 985z" fill="url(#slab)" />
    <g fill="none" stroke="#000" strokeWidth="2.200">
      <path d="M90 661L235.500 978 214 1012M235.500 978L293 991M280 1012L297.500 985 317.500 964" /><path d="M297.500 985L412 1012" strokeWidth="1.200" />
    </g>
    <path d="M1481.500 117L1617 673" stroke="#8e1d22" strokeWidth="1.200" />
    <path d="M548.500 362L587 607.500 994 676.500 1027 677 1067 668.500 1102 651.500 1126 627.500 1136 602 1176 357 1100 340z" fill="url(#round)" />
    <path d="M661 222.500L1061 268 1090 274 1127 289.500 1155.500 310 1172 332.500 1176 357 1165.500 380 1140 401 1099 417.500 1051.500 425.500 1030 426 1014 424.500 548.500 362z" fill="#e8e8e8" />
    <g fill="none" stroke="#000" strokeWidth="1.100">
      <path d="M1061 268L661 222.500 548.500 362 1014 424.500 1030 426 1051.500 425.500 1099 417.500 1140 401 1165.500 380 1176 357" />
      <path d="M552 382.500L945.500 437 1012 446.500H1052L1095.500 438.500 1135 423 1161 401.500 1174 370" />
      <path d="M561 430L943 485 1008 494.500 1043 495.500 1089 487 1128 470.500 1154 448.500 1165 420" />
      <path d="M947 415.500L934.500 666M1014 424.500L994 676.500" />
    </g>
    <g fill="none" stroke="#000" strokeWidth="2.200" strokeLinejoin="round">
      <path d="M1061 268L1090 274 1127 289.500 1155.500 310 1172 332.500 1176 357 1136 602 1126 627.500 1102 651.500 1067 668.500 1027 677 994 676.500 587 607.500 548.500 362" />
      <path d="M568.500 488.500L940 545.500 1003.500 554.500 1037.500 555.500 1085.500 545 1120 530 1145.500 507 1155 483" />
    </g>
    <g stroke="#222" strokeLinejoin="round" strokeWidth="1">
      <path d="M1060 542l11 7 12-7v3l-12 8-11-8z" fill="#6f6e5b" /><path d="M1060 542l12-6 11 6-12 7z" fill="#a3a18c" />
      <path d="M1072 531l4 6h-2v7h-4v-7h-2z" fill={RED} stroke="#7b0a10" strokeWidth=".6" /><path d="M1078 534h6M1081 531v6" strokeWidth="1.500" />
    </g>
  </svg>
);

const menus = ["파일(F)", "편집(E)", "보기(V)", "카메라(C)", "그리기(R)", "도구(T)", "창(W)", "도움말(H)"];
const side = [
  ["select", "component", "paint", "eraser"],
  ["pencil", "freehand", "rect", "rrect", "circle", "polygon", "arc", "arc2", "arc3", "pie"],
  ["move", "pushpull", "rotate", "follow", "scale", "offset"],
  ["tape", "dims", "protractor", "text", "axes", "text3d"],
  ["orbit", "pan", "zoom", "zoomwin", "extents", "previous"],
  ["person", "eye", "feet", "section"],
];

export default function App() {
  return (
    <Screen>
      <Global />
      <MenuBar>{menus.map((m) => <MenuItem type="button" key={m}>{m}</MenuItem>)}</MenuBar>
      <TopBar>
        <Group>
          <Grip />
          <T n="select" /><VLine /><T n="eraser" /><S n="pencil" /><S n="arc2" /><S n="rect" /><VLine />
          <T n="pushpull" on /><T n="offset" /><T n="move" /><T n="rotate" /><T n="scale" /><VLine />
          <T n="tape" /><T n="text" /><T n="paint" /><VLine />
          <T n="orbit" /><T n="pan" /><T n="zoom" /><T n="extents" /><VLine />
          <T n="sheets" /><T n="rubySheets" /><T n="export" /><VLine /><T n="gem" />
        </Group>
        <Group>
          <Grip />
          <T n="houseIso" /><T n="houseTop" /><T n="houseFront" /><T n="houseRight" /><T n="houseBack" /><T n="houseLeft" />
        </Group>
        <Group>
          <Grip />
          <T n="solid0" /><VLine /><T n="solid1" /><T n="solid2" /><T n="solid3" /><T n="solid4" /><T n="solid5" />
        </Group>
        <Group>
          <Grip />
          <T n="shadow" />
          <SunBox>
            <SunField $w={146}>
              <SunRange type="range" aria-label="date" defaultValue={86} $fill="linear-gradient(90deg, #fff, #fbe08a 15%, #f5b51e 35%, #f0701a 52%, #ee1111 67%, #f6a0a0 88%, #fff)" />
              <Scale>{"JFMAMJJASOND".split("").map((c, i) => <span key={i}>{c}</span>)}</Scale>
            </SunField>
            <SunField $w={115}>
              <SunRange type="range" aria-label="time" defaultValue={81} $fill="linear-gradient(90deg, #fff, #b5cdea 30%, #7d9fe6 60%, #5069dc 85%, #4a55b4)" />
              <TimeScale><span>07:08</span><span>정오</span></TimeScale>
            </SunField>
          </SunBox>
        </Group>
        <Group><Grip /><T n="touch" /></Group>
      </TopBar>

      <Middle>
        <SideBar>
          <SideInner>
            <SideGrip />
            {side.map((g, i) => (
              <React.Fragment key={i}>
                {i > 0 && <HLine />}
                <ToolGrid>{g.map((n) => <T key={n} n={n} on={n === "pushpull"} />)}</ToolGrid>
              </React.Fragment>
            ))}
          </SideInner>
        </SideBar>
        <Canvas>
          <Model />
          <KeyStack><Key>&lt;LButtonDown&gt;</Key><Key>&lt;LButtonUp&gt;</Key></KeyStack>
        </Canvas>
        <Tray>
          <TrayTitle>
            <h1>기본 트레이</h1>
            <svg width="9" height="10" viewBox="0 0 9 10"><path d="M2.500 6V1h4v5M5.500 1v5M0.500 6h8M4.500 6v4" fill="none" stroke="#111" strokeWidth="1.300" /></svg>
            <RedClose type="button" aria-label="close"><Cross c="#fff" w={2} /></RedClose>
          </TrayTitle>
          <TrayRow>
            <TrayBody>
              <DisplayBox>
                표시:
                <Options $indent={70} $top={4} $gap={7}>
                  <Option><Check type="checkbox" disabled defaultChecked />면에</Option>
                  <Option><Check type="checkbox" disabled defaultChecked />바닥에</Option>
                  <Option><Check type="checkbox" disabled />가장자리에</Option>
                </Options>
              </DisplayBox>
              <Head title="가장자리 부드럽게" />
              <SoftBox>
                <label htmlFor="angle">법선 간 각도:</label>
                <Degrees>17.3 도</Degrees>
                <SoftRange id="angle" type="range" min={0} max={180} defaultValue={18} disabled />
                <Ticks><span /><span /></Ticks>
                <Options $gap={5}>
                  <Option><Check type="checkbox" disabled defaultChecked />법선 부드럽게</Option>
                  <Option><Check type="checkbox" disabled />동일 평면 부드럽게</Option>
                </Options>
              </SoftBox>
              <Head title="레이어" />
              <IconRow $h={33}>
                <button type="button" aria-label="add layer"><Circled plus /></button>
                <button type="button" aria-label="remove layer"><Circled /></button>
                <IconSet>
                  <button type="button" aria-label="layer details"><Details /></button>
                </IconSet>
              </IconRow>
              <LayerList>
                <LayerTable>
                  <colgroup><col /><col width="50" /><col width="40" /></colgroup>
                  <thead><tr><th>이름</th><th>보기</th><th>색상</th></tr></thead>
                  <tbody>
                    <tr>
                      <td><LayerName><Radio type="radio" name="layer" defaultChecked />Layer0</LayerName></td>
                      <td><Center><Check $live type="checkbox" aria-label="Layer0" defaultChecked /></Center></td>
                      <td><Swatch type="button" aria-label="color" /></td>
                    </tr>
                  </tbody>
                </LayerTable>
              </LayerList>
              <Splitter />
              <Head title="장면" />
              <IconRow $h={32}>
                <button type="button" aria-label="refresh">
                  <svg width="18" height="18" viewBox="0 0 18 18"><path d="M2 7c2-6 10-6 13-2M16 11c-2 6-10 6-13 2" fill="none" stroke="#888" strokeWidth="1.800" /><path d="M17 1v6h-6zM1 17v-6h6z" fill="#888" /></svg>
                </button>
                <button type="button" aria-label="add scene"><Circled plus /></button>
                <button type="button" aria-label="remove scene"><Circled /></button>
                <IconSet>
                  <button type="button" aria-label="move down">
                    <svg width="14" height="16" viewBox="0 0 14 16"><path d="M11 2c-3 0-4 1-4 4v5" fill="none" stroke="#777" strokeWidth="2" /><path d="M3.500 10h7L7 15z" fill="#777" /></svg>
                  </button>
                  <button type="button" aria-label="move up">
                    <svg width="14" height="16" viewBox="0 0 14 16"><path d="M3 14c3 0 4-1 4-4V5" fill="none" stroke="#777" strokeWidth="2" /><path d="M3.500 6h7L7 1z" fill="#777" /></svg>
                  </button>
                  <button type="button" aria-label="view options">
                    <svg width="26" height="18" viewBox="0 0 26 18"><path d="M1 1h5v5H1zM1 12h5v5H1z" fill="none" stroke="#222" strokeWidth="1.500" /><path d="M9 1.500h8M9 4h5M9 6.500h7M9 11.500h8M9 14h5M9 16.500h7" stroke="#444" strokeWidth="1.300" /><path d="M20 8h6l-3 3.500z" /></svg>
                  </button>
                  <button type="button" aria-label="add to details">
                    <svg width="12" height="18" viewBox="0 0 12 18"><path d="M.5.500h11v17H.5z" fill="#fff" stroke="#888" /><path d="M2 2h8L6 6z" /><path d="M0 8h12v10H0z" /><path d="M3 13h6M6 10v6" stroke="#fff" strokeWidth="1.500" /></svg>
                  </button>
                  <button type="button" aria-label="scene details"><Details /></button>
                </IconSet>
              </IconRow>
              <SceneList />
            </TrayBody>
            <ScrollBar>
              <ScrollButton $h={24} type="button" aria-label="scroll up"><Chevron up /></ScrollButton>
              <Gap $n={745} />
              <Thumb />
              <Gap $n={61} />
              <ScrollButton $h={20} type="button" aria-label="scroll down"><Chevron /></ScrollButton>
            </ScrollBar>
          </TrayRow>
        </Tray>
      </Middle>

      <Status>
        <svg width="16" height="18" viewBox="0 0 16 18"><circle cx="8" cy="9" r="7.300" fill="#fafafa" stroke="#999" strokeWidth="1.300" /><path d="M8 15C6 11 5 9 5 7a3 3 0 0 1 6 0c0 2-1 4-3 8z" fill="#888" /></svg>
        <svg width="16" height="18" viewBox="0 0 16 18"><circle cx="8" cy="9" r="7.200" fill="#fff" stroke="#000" strokeWidth="1.600" /><circle cx="8" cy="5" r="1.500" /><path d="M5.500 7.500h5v3H9.500V15h-3v-4.500h-1z" /></svg>
        <svg width="16" height="18" viewBox="0 0 16 18"><circle cx="8" cy="9" r="7.300" fill="#eee" stroke="#999" strokeWidth="1.300" /><circle cx="8" cy="6.500" r="3" fill="#999" /><path d="M2.500 14c1-5 10-5 11 0a7 7 0 0 1-11 0z" fill="#999" /></svg>
        <StatusText>끌어서 면을 밀거나 끌거나 값을 입력합니다. Ctrl = 새 시작 면 만들기 토글</StatusText>
        <Measure><span>거리</span><MeasureInput defaultValue="192mm" /></Measure>
      </Status>
    </Screen>
  );
}
